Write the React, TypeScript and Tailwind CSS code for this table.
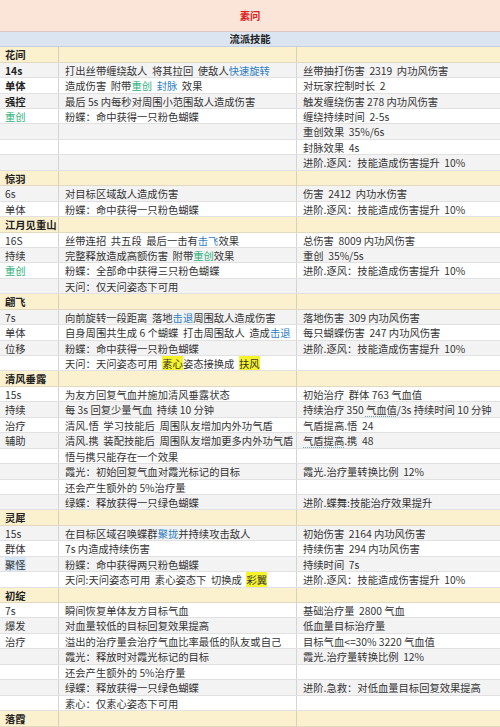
import React from "react";

// text pieces: plain string, or styled span
type Seg = string | { t: string; k: "g" | "b" | "y" | "u" | "hl" };
type Row =
  | { head: string }
  | { l?: Seg[]; m?: Seg[]; r?: Seg[]; bold?: boolean };

const g = (t: string): Seg => ({ t, k: "g" });
const b = (t: string): Seg => ({ t, k: "b" });
const y = (t: string): Seg => ({ t, k: "y" });
const u = (t: string): Seg => ({ t, k: "u" });

const ROWS: Row[] = [
  { head: "花间" },
  { l: ["14s"], m: ["打出丝带缠绕敌人  将其拉回  使敌人", b("快速旋转")], r: ["丝带抽打伤害  2319  内功风伤害"], bold: true },
  { l: ["单体"], m: ["造成伤害  附带", g("重创"), "  ", b("封脉"), "  效果"], r: ["对玩家控制时长  2"], bold: true },
  { l: ["强控"], m: ["最后 5s 内每秒对周围小范围敌人造成伤害"], r: ["触发缠绕伤害 278 内功风伤害"], bold: true },
  { l: [g("重创")], m: ["粉蝶：命中获得一只粉色蝴蝶"], r: ["缠绕持续时间  2-5s"] },
  { r: ["重创效果  35%/6s"] },
  { r: ["封", u("脉"), "效果  4s"] },
  { r: ["进阶.逐风：技能造成伤害提升  10%"] },
  { head: "惊羽" },
  { l: ["6s"], m: ["对目标区域敌人造成伤害"], r: ["伤害  2412  内功水伤害"] },
  { l: ["单体"], m: ["粉蝶：命中获得一只粉色蝴蝶"], r: ["进阶.逐风：技能造成伤害提升  10%"] },
  { head: "江月见重山" },
  { l: ["16S"], m: ["丝带连招  共五段  最后一击有", b("击飞"), "效果"], r: ["总伤害  8009 内功风伤害"] },
  { l: ["持续"], m: ["完整释放造成高额伤害  附带", g("重创"), "效果"], r: ["重创  35%/5s"] },
  { l: [g("重创")], m: ["粉蝶：全部命中获得三只粉色蝴蝶"], r: ["进阶.逐风：技能造成伤害提升  10%"] },
  { m: ["天问：仅天问姿态下可用"] },
  { head: "翩飞" },
  { l: ["7s"], m: ["向前旋转一段距离  落地", b("击退"), "周围敌人造成伤害"], r: ["落地伤害  309 内功风伤害"] },
  { l: ["单体"], m: ["自身周围共生成 6 个蝴蝶  打击周围敌人  造成", b("击退")], r: ["每只蝴蝶伤害  247 内功风伤害"] },
  { l: ["位移"], m: ["粉蝶：命中获得一只粉色蝴蝶"], r: ["进阶.逐风：技能造成伤害提升  10%"] },
  { m: ["天问：天问姿态可用  ", y("素心"), "姿态接换成  ", y("扶风")] },
  { head: "清风垂露" },
  { l: ["15s"], m: ["为友方回复气血并施加清风垂露状态"], r: ["初始治疗  群体 763 ", u("气血值")] },
  { l: ["持续"], m: ["每 3s 回复少量气血  持续 10 分钟"], r: ["持续治疗 350 ", u("气血值"), "/3s 持续时间 10 分钟"] },
  { l: ["治疗"], m: ["清风.悟  学习技能后  周围队友增加内外功气盾"], r: [u("气盾提高"), ".悟  24"] },
  { l: ["辅助"], m: ["清风.携  装配技能后  周围队友增加更多内外功气盾"], r: [u("气盾提高"), ".携  48"] },
  { m: ["悟与", u("携只能"), "存在一个效果"] },
  { m: ["霞光：初始回复气血对霞光标记的目标"], r: ["霞光.治疗量转换比例  12%"] },
  { m: ["还会产生额外的 5%治疗量"] },
  { m: ["绿蝶：释放获得一只绿色蝴蝶"], r: ["进阶.蝶舞:技能治疗效果提升"] },
  { head: "灵犀" },
  { l: ["15s"], m: ["在目标区域召唤蝶群", b("聚拢"), "并持续攻击敌人"], r: ["初始伤害  2164 内功风伤害"] },
  { l: ["群体"], m: ["7s 内造成持续伤害"], r: ["持续伤害  294 内功风伤害"] },
  { l: [{ t: "聚怪", k: "hl" }], m: ["粉蝶：命中获得两只粉色蝴蝶"], r: ["持续时间  7s"] },
  { m: ["天问:天问姿态可用  素心姿态下  切换成  ", y("彩翼")], r: ["进阶.逐风：技能造成伤害提升  10%"] },
  { head: "初绽" },
  { l: ["7s"], m: ["瞬间恢复单体友方目标气血"], r: ["基础治疗量  2800 气血"] },
  { l: ["爆发"], m: ["对血量较低的目标回复效果提高"], r: ["低血量目标治疗量"] },
  { l: ["治疗"], m: ["溢出的治疗量会治疗气血比率最低的队友或自己"], r: ["目标气血<=30% 3220 ", u("气血值")] },
  { m: ["霞光：释放时对霞光标记的目标"], r: ["霞光.治疗量转换比例  12%"] },
  { m: ["还会产生额外的 5%治疗量"] },
  { m: ["绿蝶：释放获得一只绿色蝴蝶"], r: ["进阶.急救：对低血量目标回复效果提高"] },
  { m: ["素心：仅素心姿态下可用"] },
  { head: "落霞" },
];

function Text({ segs }: { segs?: Seg[] }) {
  if (!segs) return null;
  return (
    <>
      {segs.map((s, i) => {
        if (typeof s === "string") return <span key={i}>{s}</span>;
        if (s.k === "g") return <span key={i} className="text-[#2fb27c]">{s.t}</span>;
        if (s.k === "b") return <span key={i} className="text-[#2e80c4]">{s.t}</span>;
        if (s.k === "y") return <span key={i} className="bg-[#f7f52a]">{s.t}</span>;
        if (s.k === "hl")
          return (
            <span key={i} className="bg-[#d6e6f6] underline decoration-dotted decoration-[#6f9fd6] underline-offset-2">
              {s.t}
            </span>
          );
        return (
          <span key={i} className="underline decoration-dotted decoration-[#6f9fd6] underline-offset-2">
            {s.t}
          </span>
        );
      })}
    </>
  );
}

export default function App() {
  return (
    <div
      className="w-[500px] h-[727px] overflow-hidden bg-white text-[#333] text-[10.3px]"
      style={{ fontFamily: '"Noto Sans CJK SC", "Noto Sans", sans-serif' }}
    >
      {/* Title */}
      <div className="h-[31.5px] bg-[#fbe4d8] border-b border-[#dcc8c0] flex items-center justify-center">
        <span className="text-[#e0201b] font-bold">素问</span>
      </div>

      {/* Section band */}
      <div className="h-[15.8px] bg-[#dbe5f1] border-b border-[#c6d0dc] flex items-center justify-center font-bold text-[#222]">
        流派技能
      </div>

      {/* Table */}
      <div>
        {ROWS.map((row, i) => {
          if ("head" in row) {
            return (
              <div
                key={i}
                className="h-[15.44px] grid grid-cols-[59px_238px_1fr] bg-[#fcf1cf] border-b border-[#e2d9c0] leading-[15px]"
              >
                <div className="pl-[5px] font-bold text-[#222] border-r border-[#d6d0c0] whitespace-nowrap">{row.head}</div>
                <div className="border-r border-[#d6d0c0]" />
                <div />
              </div>
            );
          }
          const bg = i % 2 === 1 ? "bg-[#f3f3f3]" : "bg-white";
          return (
            <div
              key={i}
              className={`h-[15.44px] grid grid-cols-[59px_238px_1fr] ${bg} border-b border-[#e1e1e1] leading-[15px] whitespace-pre overflow-hidden`}
            >
              <div className={`pl-[5px] border-r border-[#d4d4d4] ${row.bold ? "font-bold text-[#222]" : ""}`}>
                <Text segs={row.l} />
              </div>
              <div className="pl-[6px] border-r border-[#d4d4d4] overflow-hidden">
                <Text segs={row.m} />
              </div>
              <div className="pl-[6px] overflow-hidden">
                <Text segs={row.r} />
              </div>
            </div>
          );
        })}
      </div>
    </div>
  );
}
